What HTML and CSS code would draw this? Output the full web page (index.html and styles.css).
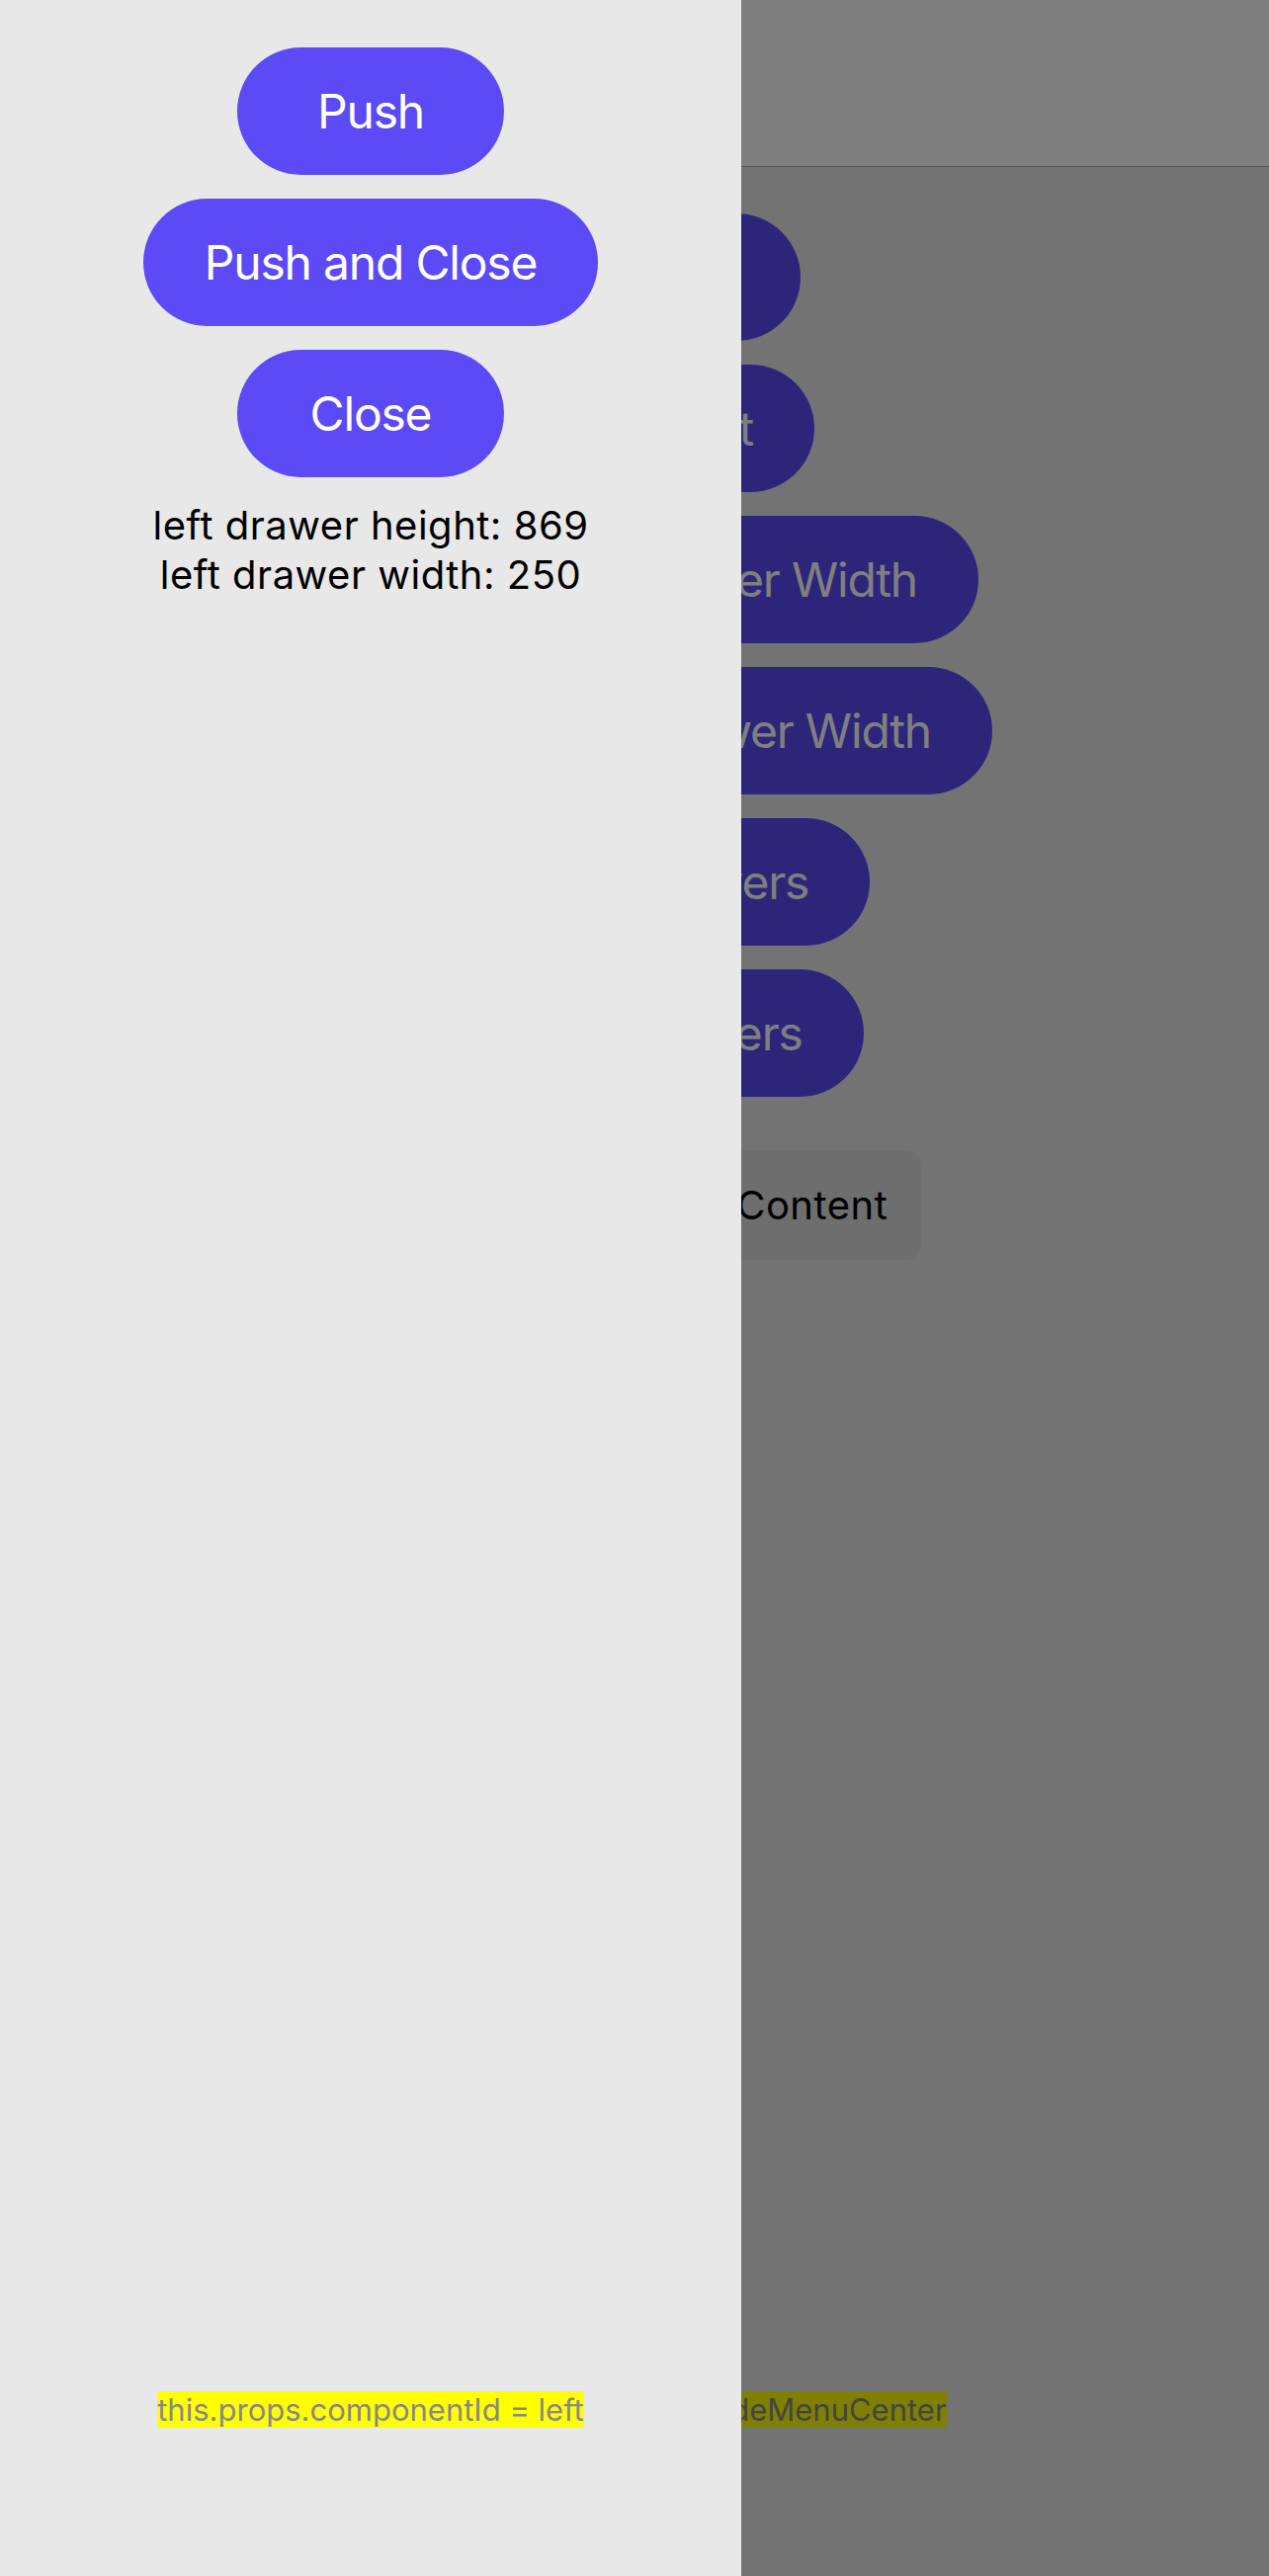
FILE: index.html
```html
<!DOCTYPE html>
<html lang="en">
<head>
<meta charset="utf-8">
<title>Side Menu</title>
<link rel="stylesheet" href="styles.css">
</head>
<body>
<div class="app">
  <div class="main">
    <header class="topbar"></header>
    <div class="main-body">
      <button class="btn">Open Left</button>
      <button class="btn">Open Right</button>
      <button class="btn">Change Left Drawer Width</button>
      <button class="btn">Change Right Drawer Width</button>
      <button class="btn">Disable Drawers</button>
      <button class="btn">Enable Drawers</button>
      <div class="content-box">Side Menu Center Content</div>
      <div class="footer"><span class="cid">this.props.componentId = SideMenuCenter</span></div>
    </div>
  </div>
  <div class="scrim"></div>
  <aside class="drawer">
    <div class="drawer-body">
      <button class="btn">Push</button>
      <button class="btn">Push and Close</button>
      <button class="btn">Close</button>
      <p class="info">left drawer height: 869<br>left drawer width: 250</p>
    </div>
    <div class="footer"><span class="cid">this.props.componentId = left</span></div>
  </aside>
</div>
</body>
</html>
```

FILE: styles.css
```css
* { box-sizing: border-box; }

html, body {
  margin: 0;
  padding: 0;
}

body {
  font-family: Inter, "Noto Sans", "Liberation Sans", sans-serif;
  color: #000;
  background: #e6e6e6;
}

.app {
  position: relative;
  width: 1284px;
  height: 2607px;
  overflow: hidden;
}

.main {
  display: flex;
  flex-direction: column;
  height: 100%;
  background: #e6e6e6;
}

.topbar {
  height: 169px;
  flex: none;
  background: #ffffff;
  border-bottom: 1px solid #b4b4b4;
}

.main-body {
  flex: 1;
  display: flex;
  flex-direction: column;
  align-items: center;
  padding-top: 47px;
  gap: 24px;
}

.btn {
  display: flex;
  align-items: center;
  justify-content: center;
  height: 129px;
  min-width: 270px;
  padding: 0 62px;
  border: none;
  border-radius: 65px;
  background: #5b4af5;
  color: #ffffff;
  font-family: inherit;
  font-size: 48px;
  font-weight: 400;
  line-height: 1.2;
  letter-spacing: -1.2px;
  white-space: nowrap;
}

.content-box {
  margin-top: 30px;
  width: 580px;
  height: 111px;
  display: flex;
  align-items: center;
  justify-content: center;
  background: #dcdcdc;
  border-radius: 16px;
  font-size: 40px;
  letter-spacing: 0.5px;
  white-space: nowrap;
}

.footer {
  margin-top: auto;
  padding-bottom: 150px;
  display: flex;
  justify-content: center;
}

.cid {
  background: #ffff00;
  color: #888888;
  font-size: 31px;
  line-height: 37px;
  white-space: nowrap;
}

.scrim {
  position: absolute;
  inset: 0;
  background: rgba(0, 0, 0, 0.5);
}

.drawer {
  position: absolute;
  top: 0;
  left: 0;
  bottom: 0;
  width: 750px;
  background: #e8e8e8;
  display: flex;
  flex-direction: column;
}

.drawer-body {
  display: flex;
  flex-direction: column;
  align-items: center;
  padding-top: 48px;
  gap: 24px;
}

.info {
  margin: 0;
  font-size: 40px;
  line-height: 50px;
  letter-spacing: 0.5px;
  text-align: center;
  color: #000;
}
```
